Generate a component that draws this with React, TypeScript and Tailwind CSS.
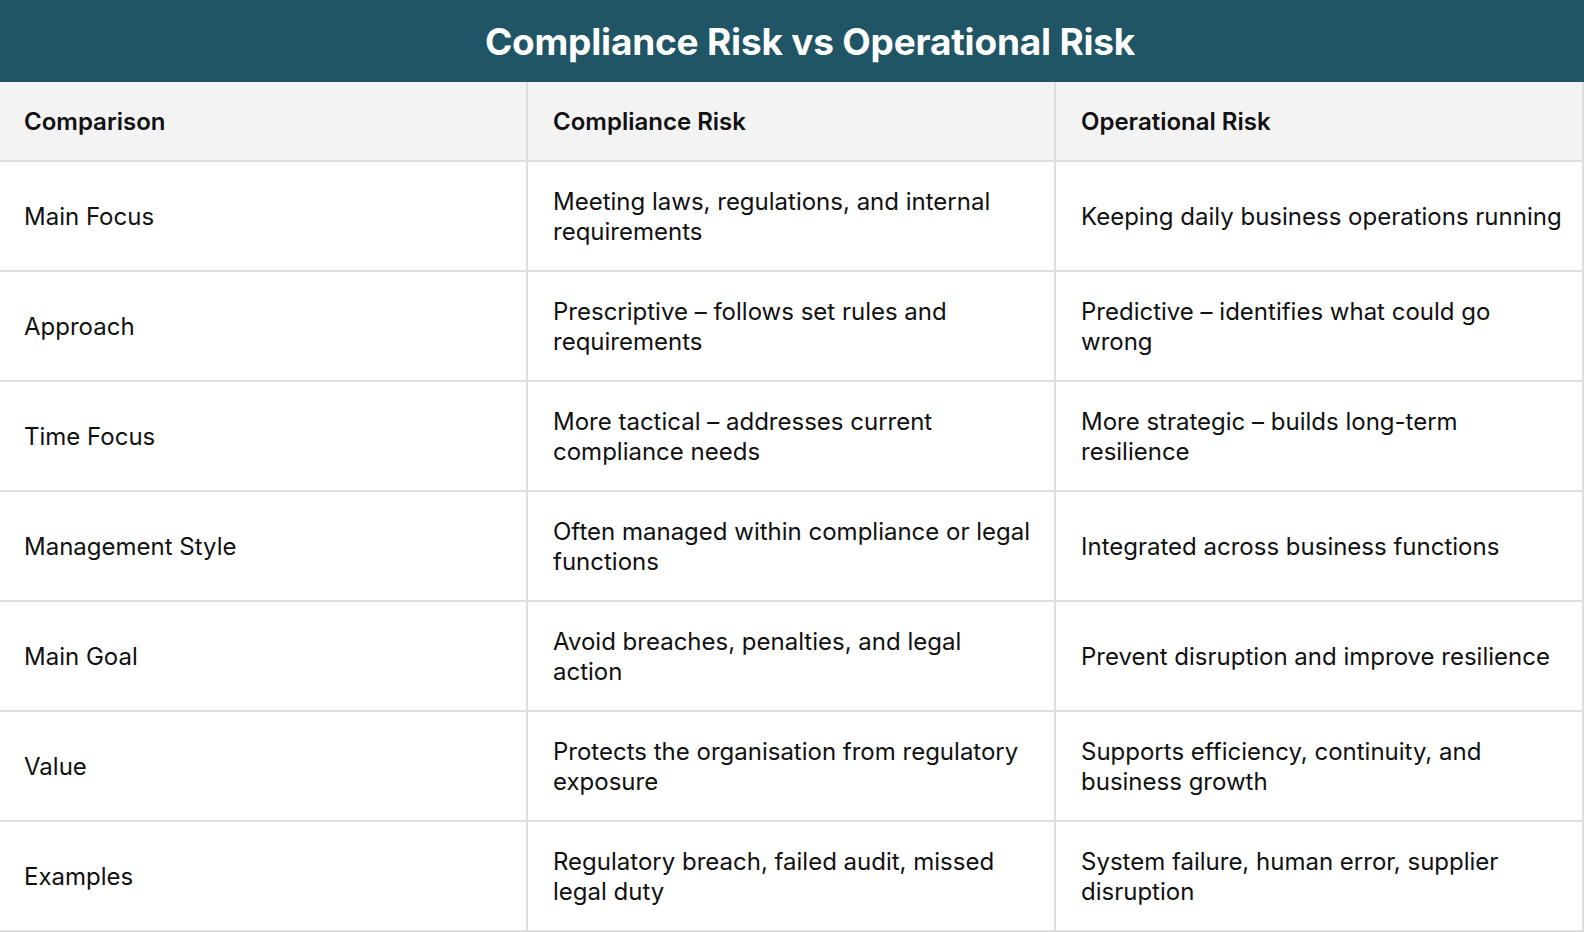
const rows: [string, string, string][] = [
  ["Main Focus", "Meeting laws, regulations, and internal requirements", "Keeping daily business operations running"],
  ["Approach", "Prescriptive – follows set rules and requirements", "Predictive – identifies what could go wrong"],
  ["Time Focus", "More tactical – addresses current compliance needs", "More strategic – builds long-term resilience"],
  ["Management Style", "Often managed within compliance or legal functions", "Integrated across business functions"],
  ["Main Goal", "Avoid breaches, penalties, and legal action", "Prevent disruption and improve resilience"],
  ["Value", "Protects the organisation from regulatory exposure", "Supports efficiency, continuity, and business growth"],
  ["Examples", "Regulatory breach, failed audit, missed legal duty", "System failure, human error, supplier disruption"],
];

export default function App() {
  return (
    <div className="w-[1584px] h-[932px] overflow-hidden bg-white font-['Inter',sans-serif] text-[#111111]">
      <div className="h-[82px] bg-[#1f5565] flex items-center justify-center pl-[36px] pt-[2px]">
        <h1 className="text-[37px] font-bold tracking-[-0.2px] text-white">Compliance Risk vs Operational Risk</h1>
      </div>
      <table className="w-full table-fixed border-collapse">
        <colgroup>
          <col className="w-[527px]" />
          <col className="w-[528px]" />
          <col />
        </colgroup>
        <thead>
          <tr className="h-[79px] bg-[#f3f3f3] border-b-2 border-[#dedede]">
            {["Comparison", "Compliance Risk", "Operational Risk"].map((h, i) => (
              <th
                key={h}
                className={`pr-6 pt-[2px] text-left text-[24px] font-semibold ${i > 0 ? "pl-[25px] border-l-2 border-[#dedede]" : "pl-6"} ${i === 2 ? "border-r-2" : ""}`}
              >
                {h}
              </th>
            ))}
          </tr>
        </thead>
        <tbody>
          {rows.map((r) => (
            <tr key={r[0]} className="h-[110px] border-b-2 border-[#dedede]">
              <td className="px-6 pt-[2px] text-[24px] leading-[30px]">{r[0]}</td>
              <td className="pl-[25px] pr-5 pt-[2px] text-[24px] leading-[30px] border-l-2 border-[#dedede]">{r[1]}</td>
              <td className="pl-[25px] pr-4 pt-[2px] text-[24px] leading-[30px] border-l-2 border-r-2 border-[#dedede]">{r[2]}</td>
            </tr>
          ))}
        </tbody>
      </table>
    </div>
  );
}
